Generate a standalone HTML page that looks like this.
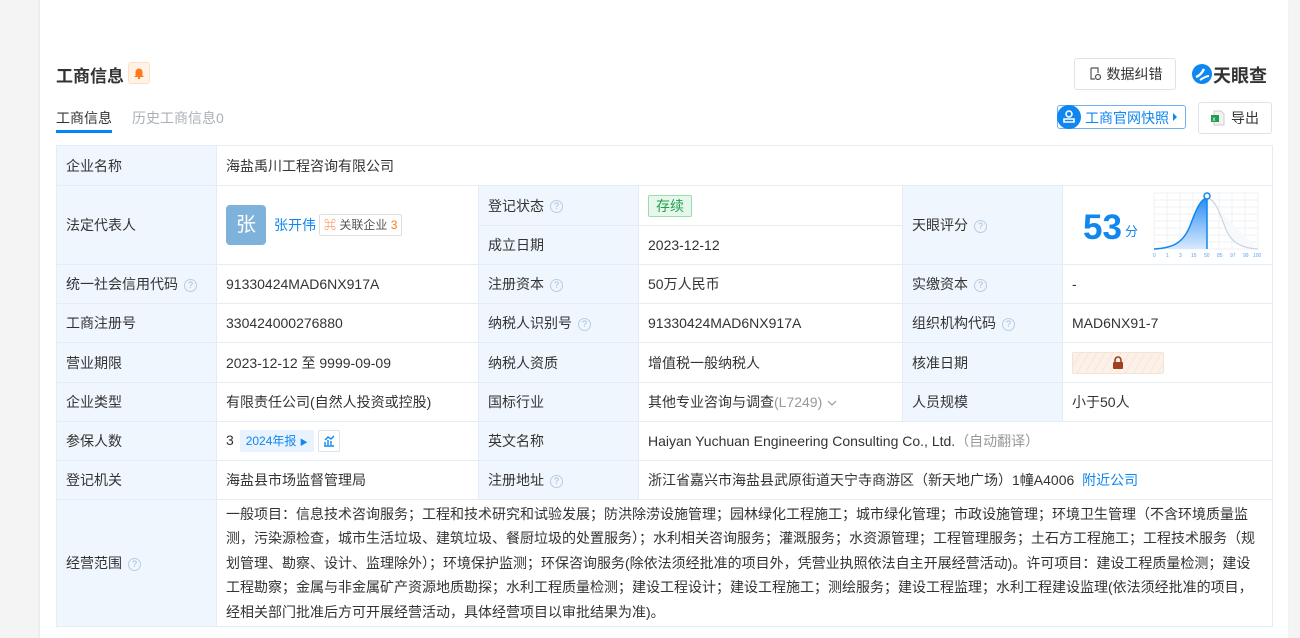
<!DOCTYPE html>
<html><head><meta charset="utf-8"><style>
*{margin:0;padding:0;box-sizing:border-box}
body{width:1300px;height:638px;background:#f4f4f4;font-family:"Liberation Sans","Noto Sans CJK SC",sans-serif;font-size:14px;color:#333;position:relative;overflow:hidden}
.card{position:absolute;left:40px;top:0;width:1248px;height:638px;background:#fff;box-shadow:-1px 0 2px #e6e6e6}
.a{position:absolute;white-space:nowrap}
table{position:absolute;left:56px;top:145px;border-collapse:collapse;table-layout:fixed}
td{border:1px solid #e4edf6;padding:0 0 0 9px;vertical-align:middle;white-space:nowrap;line-height:20px}
td.l{background:#eff6fd;padding-left:9px}
.q{display:inline-block;width:13px;height:13px;border:1px solid #b8cde4;border-radius:50%;color:#9fbad8;font-size:9px;line-height:11px;text-align:center;margin-left:6px;vertical-align:middle;position:relative;top:0}
.btn{position:absolute;border:1px solid #dfe3e8;border-radius:3px;background:#fff;font-size:14px;color:#333;text-align:center}
</style></head><body>
<div class="card"></div>
<div class="a" style="left:56px;top:62px;font-size:17px;font-weight:bold;color:#333">工商信息</div>
<div class="a" style="left:128px;top:62px;width:22px;height:22px;background:#fff2e6;border:1px solid #ffe0c4;border-radius:3px"><svg width="20" height="20" viewBox="0 0 20 20"><path d="M6.5 13V9a3.5 3.5 0 0 1 7 0v4h1v1h-9v-1z" fill="#ff7a1a"/><circle cx="10" cy="15" r="1.2" fill="#ff7a1a"/></svg></div>
<div class="a" style="left:56px;top:108px;font-size:14px;color:#333">工商信息</div>
<div class="a" style="left:56px;top:130px;width:56px;height:3px;background:#0084ff"></div>
<div class="a" style="left:132px;top:108px;font-size:14px;color:#aab0b8">历史工商信息0</div>

<div class="btn" style="left:1074px;top:58px;width:102px;height:32px;line-height:30px"><svg width="14" height="14" viewBox="0 0 14 14" style="vertical-align:-2px;margin-right:5px"><path d="M3 1h7v5M3 1v11h4" fill="none" stroke="#555" stroke-width="1.2"/><circle cx="10" cy="10" r="2.5" fill="none" stroke="#555" stroke-width="1.2"/></svg>数据纠错</div>
<svg class="a" style="left:1191px;top:63px" width="22" height="22" viewBox="0 0 22 22"><circle cx="11" cy="11" r="10" fill="#0f86f0"/><path d="M5 14c3-1 6-4 8-8" stroke="#fff" stroke-width="2.5" fill="none"/><path d="M9 17c3-2 6-4 9-4" stroke="#fff" stroke-width="2" fill="none"/></svg>
<div class="a" style="left:1213px;top:62px;font-size:18px;font-weight:bold;color:#333">天眼查</div>

<div class="a" style="left:1057px;top:105px;width:129px;height:24px;border:1px solid #6fb1f4;border-radius:3px;background:#fff"></div>
<div class="a" style="left:1057px;top:105px;width:24px;height:24px;border-radius:50%;background:#0f86f0"><svg width="24" height="24" viewBox="0 0 24 24"><circle cx="12" cy="9" r="3" fill="none" stroke="#fff" stroke-width="1.6"/><path d="M7 17h10v-3H7z" fill="none" stroke="#fff" stroke-width="1.6"/></svg></div>
<div class="a" style="left:1085px;top:108px;font-size:14px;color:#0f86f0">工商官网快照</div>
<div class="a" style="left:1173px;top:113px;width:0;height:0;border-left:4px solid #0f86f0;border-top:4px solid transparent;border-bottom:4px solid transparent"></div>
<div class="btn" style="left:1198px;top:102px;width:74px;height:32px;line-height:30px"><svg width="14" height="16" viewBox="0 0 14 16" style="vertical-align:-3px;margin-right:6px"><path d="M3 1h7l3 3v11H3z" fill="#f3f3f3" stroke="#ccc"/><rect x="0" y="5" width="8" height="7" fill="#1f9e4f"/><text x="1.5" y="11" font-size="6" fill="#fff">x</text></svg>导出</div>

<table>
<colgroup><col style="width:160px"><col style="width:262px"><col style="width:160px"><col style="width:264px"><col style="width:160px"><col style="width:210px"></colgroup>
<tr style="height:40px"><td class="l">企业名称</td><td colspan="5">海盐禹川工程咨询有限公司</td></tr>
<tr style="height:40px"><td class="l" rowspan="2">法定代表人</td><td rowspan="2"><span style="display:inline-block;width:40px;height:40px;background:#7fb2da;border-radius:4px;color:#fff;font-size:20px;line-height:40px;text-align:center;vertical-align:middle">张</span><span style="color:#0f86f0;margin-left:8px;vertical-align:middle">张开伟</span><span style="display:inline-block;border:1px solid #e0e0e0;border-radius:2px;font-size:12px;padding:0 4px;height:22px;line-height:20px;margin-left:3px;vertical-align:middle;color:#555"><span style="color:#ff7a3c">⌘</span> 关联企业 <span style="color:#ff7a1a">3</span></span></td><td class="l">登记状态<span class="q">?</span></td><td><span style="display:inline-block;background:#e6f8ec;border:1px solid #9ddcb1;color:#21a04c;height:22px;line-height:20px;padding:0 7px;border-radius:2px">存续</span></td><td class="l" rowspan="2">天眼评分<span class="q">?</span></td><td rowspan="2" style="position:relative"><span style="position:absolute;left:20px;top:22px;font-size:35px;font-weight:bold;color:#0f86f0;line-height:40px">53</span><span style="position:absolute;left:62px;top:36px;font-size:13px;color:#0f86f0">分</span>
<svg style="position:absolute;left:90px;top:5px" width="108" height="68" viewBox="0 0 108 68"><g stroke="#edf0f3" stroke-width="1"><path d="M1 2h104M1 9h104M1 16h104M1 23h104M1 30h104M1 37h104M1 44h104M1 51h104M1 58h104M1 2v56M14 2v56M27 2v56M40 2v56M53 2v56M66 2v56M79 2v56M92 2v56M105 2v56"/></g><defs><linearGradient id="g" x1="0" y1="0" x2="0" y2="1"><stop offset="0" stop-color="#2a8df5"/><stop offset="1" stop-color="#d9eafd"/></linearGradient></defs><path d="M1 58C20 57 30 52 37 35C44 16 48 8 54 7V58z" fill="url(#g)"/><path d="M1 58C20 57 30 52 37 35C44 16 48 8 54 7" fill="none" stroke="#0f86f0" stroke-width="1.5"/><path d="M54 7C62 8 66 20 72 36C78 52 88 57 105 58" fill="#f7f9fb" stroke="#c9d6e3" stroke-width="1.2"/><path d="M54 5V58" stroke="#0f86f0" stroke-width="1.5"/><circle cx="54" cy="5" r="3" fill="#fff" stroke="#0f86f0" stroke-width="1.5"/><g font-size="5" fill="#5aa3ef" font-family="Liberation Sans"><text x="0" y="66">0</text><text x="13" y="66">1</text><text x="26" y="66">3</text><text x="38" y="66">15</text><text x="51" y="66">50</text><text x="64" y="66">85</text><text x="77" y="66">97</text><text x="90" y="66">99</text><text x="100" y="66">100</text></g></svg></td></tr>
<tr style="height:39px"><td class="l">成立日期</td><td>2023-12-12</td></tr>
<tr style="height:39px"><td class="l">统一社会信用代码<span class="q">?</span></td><td>91330424MAD6NX917A</td><td class="l">注册资本<span class="q">?</span></td><td>50万人民币</td><td class="l">实缴资本<span class="q">?</span></td><td>-</td></tr>
<tr style="height:39px"><td class="l">工商注册号</td><td>330424000276880</td><td class="l">纳税人识别号<span class="q">?</span></td><td>91330424MAD6NX917A</td><td class="l">组织机构代码<span class="q">?</span></td><td>MAD6NX91-7</td></tr>
<tr style="height:40px"><td class="l">营业期限</td><td>2023-12-12 至 9999-09-09</td><td class="l">纳税人资质</td><td>增值税一般纳税人</td><td class="l">核准日期</td><td><span style="display:inline-block;width:92px;height:22px;border:1px solid #f5e4d4;border-radius:2px;background:repeating-linear-gradient(120deg,#fbf1e8 0 6px,#f5e6d9 6px 7px);text-align:center;vertical-align:middle"><svg width="12" height="14" viewBox="0 0 12 14" style="margin-top:3px"><path d="M3 6V4a3 3 0 0 1 6 0v2" fill="none" stroke="#a23f22" stroke-width="1.6"/><rect x="1" y="6" width="10" height="7" rx="1" fill="#a23f22"/></svg></span></td></tr>
<tr style="height:39px"><td class="l">企业类型</td><td>有限责任公司(自然人投资或控股)</td><td class="l">国标行业</td><td>其他专业咨询与调查<span style="color:#999">(L7249)</span> <svg width="12" height="8" viewBox="0 0 12 8"><path d="M2 2l4 4 4-4" fill="none" stroke="#999" stroke-width="1.2"/></svg></td><td class="l">人员规模</td><td>小于50人</td></tr>
<tr style="height:39px"><td class="l">参保人数</td><td>3 <span style="display:inline-block;background:#e8f3ff;color:#0f86f0;font-size:12px;height:22px;line-height:22px;padding:0 6px;border-radius:2px;margin-left:2px;vertical-align:middle">2024年报 <span style="font-size:8px">▶</span></span> <span style="display:inline-block;width:22px;height:22px;border:1px solid #dde3ea;border-radius:2px;vertical-align:middle;text-align:center"><svg width="14" height="14" viewBox="0 0 14 14" style="margin-top:3px"><path d="M2 12h10M3 11V8M6 11V6M9 11V7M3 6l3-3 3 2 3-3" fill="none" stroke="#0f86f0" stroke-width="1.4"/></svg></span></td><td class="l">英文名称</td><td colspan="3">Haiyan Yuchuan Engineering Consulting Co., Ltd.<span style="color:#999">（自动翻译）</span></td></tr>
<tr style="height:39px"><td class="l">登记机关</td><td>海盐县市场监督管理局</td><td class="l">注册地址<span class="q">?</span></td><td colspan="3">浙江省嘉兴市海盐县武原街道天宁寺商游区（新天地广场）1幢A4006 <span style="color:#0f86f0;margin-left:4px">附近公司</span></td></tr>
<tr style="height:127px"><td class="l">经营范围<span class="q">?</span></td><td colspan="5" style="white-space:normal;line-height:24.5px;padding-right:8px">一般项目：信息技术咨询服务；工程和技术研究和试验发展；防洪除涝设施管理；园林绿化工程施工；城市绿化管理；市政设施管理；环境卫生管理（不含环境质量监测，污染源检查，城市生活垃圾、建筑垃圾、餐厨垃圾的处置服务）；水利相关咨询服务；灌溉服务；水资源管理；工程管理服务；土石方工程施工；工程技术服务（规划管理、勘察、设计、监理除外）；环境保护监测；环保咨询服务(除依法须经批准的项目外，凭营业执照依法自主开展经营活动)。许可项目：建设工程质量检测；建设工程勘察；金属与非金属矿产资源地质勘探；水利工程质量检测；建设工程设计；建设工程施工；测绘服务；建设工程监理；水利工程建设监理(依法须经批准的项目，经相关部门批准后方可开展经营活动，具体经营项目以审批结果为准)。</td></tr>
</table>
</body></html>
